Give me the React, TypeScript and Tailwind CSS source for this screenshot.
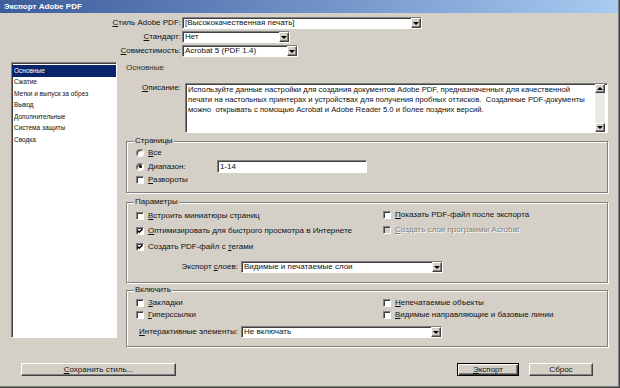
import React from 'react';

const sunken =
  'border border-t-[#808080] border-l-[#808080] border-b-white border-r-white shadow-[inset_1px_1px_0_#404040]';
const raised =
  'border border-t-white border-l-white border-b-[#404040] border-r-[#404040] shadow-[inset_-1px_-1px_0_#808080]';

function Arrow({ up }: { up?: boolean }) {
  return up ? (
    <span className="w-0 h-0 border-x-[3px] border-x-transparent border-b-[3px] border-b-black" />
  ) : (
    <span className="w-0 h-0 border-x-[3px] border-x-transparent border-t-[3px] border-t-black" />
  );
}

function Combo({ className, value }: { className: string; value: string }) {
  return (
    <div className={`${className} h-[12px] flex items-stretch bg-white ${sunken}`}>
      <span className="flex-1 pl-[2px] leading-[10px] whitespace-nowrap overflow-hidden">{value}</span>
      <span className={`w-[10px] flex items-center justify-center bg-[#d4d0c8] ${raised}`}>
        <Arrow />
      </span>
    </div>
  );
}

function Check({ on, off }: { on?: boolean; off?: boolean }) {
  return (
    <span
      className={`w-[8px] h-[8px] shrink-0 flex items-center justify-center ${off ? 'bg-[#d4d0c8]' : 'bg-white'} ${sunken}`}
    >
      {on && (
        <svg width="6" height="6" viewBox="0 0 6 6">
          <path d="M0.6 2.6 L2.2 4.3 L5.5 0.9" stroke="#000" strokeWidth="1.4" fill="none" />
        </svg>
      )}
    </span>
  );
}

function Radio({ on }: { on?: boolean }) {
  return (
    <span className="w-[8px] h-[8px] shrink-0 rounded-full bg-white border border-t-[#808080] border-l-[#808080] border-b-white border-r-white shadow-[inset_1px_1px_0_#404040] flex items-center justify-center">
      {on && <span className="w-[3px] h-[3px] rounded-full bg-black" />}
    </span>
  );
}

function Opt({ box, children, dim }: { box: React.ReactNode; children: React.ReactNode; dim?: boolean }) {
  return (
    <div className="h-[12px] flex items-center gap-[4px] whitespace-nowrap">
      {box}
      <span className={dim ? 'text-[#808080] [text-shadow:1px_1px_0_#fff]' : ''}>{children}</span>
    </div>
  );
}

function Group({ title, className, children }: { title: string; className: string; children: React.ReactNode }) {
  return (
    <div className={`relative border border-[#808080] shadow-[1px_1px_0_#fff,inset_1px_1px_0_#fff] ${className}`}>
      <span className="absolute -top-[6px] left-[7px] px-[1px] bg-[#d4d0c8] leading-[10px]">{title}</span>
      {children}
    </div>
  );
}

export default function App() {
  const pages = ['Основные', 'Сжатие', 'Метки и выпуск за обрез', 'Вывод', 'Дополнительные', 'Система защиты', 'Сводка'];

  return (
    <div className="w-[620px] h-[388px] overflow-hidden bg-[#d4d0c8] text-[8px] leading-[10px] text-[#111] font-['Liberation_Sans',Arial,sans-serif] border-r border-b border-[#404040]">
      <div className="h-full flex flex-col border-r border-b border-[#808080]">
        {/* Title bar */}
        <div className="h-[13px] shrink-0 flex items-center pl-[4px] bg-linear-to-r from-[#3d5c9c] via-[#7090c6] to-[#a8cbf1] text-white font-bold">
          Экспорт Adobe PDF
        </div>

        {/* Preset rows */}
        <div className="mt-[4px] flex flex-col gap-[2px]">
          <div className="h-[12px] flex items-center">
            <span className="w-[181px] text-right">
              <u>С</u>тиль Adobe PDF:
            </span>
            <Combo className="ml-[1px] w-[240px]" value="[Высококачественная печать]" />
          </div>
          <div className="h-[12px] flex items-center">
            <span className="w-[181px] text-right">
              <u>С</u>тандарт:
            </span>
            <Combo className="ml-[1px] w-[108px]" value="Нет" />
          </div>
          <div className="h-[12px] flex items-center">
            <span className="w-[181px] text-right">
              <u>С</u>овместимость:
            </span>
            <Combo className="ml-[1px] w-[116px]" value="Acrobat 5 (PDF 1.4)" />
          </div>
        </div>

        {/* Main */}
        <div className="mt-[5px] flex items-start">
          {/* Page list */}
          <div className={`ml-[11px] w-[106px] h-[276px] bg-white pt-[2px] text-[6.5px] ${sunken}`}>
            {pages.map((p, i) => (
              <div
                key={p}
                className={`h-[11.5px] flex items-center pl-[2px] whitespace-nowrap ${i === 0 ? 'bg-[#0a246a] text-white' : ''}`}
              >
                {p}
              </div>
            ))}
          </div>

          {/* Settings */}
          <div className="ml-[9px] w-[482px] flex flex-col">
            <div className="h-[12px] leading-[12px] text-[#303030]">Основные</div>

            <div className="mt-[9px] flex items-start">
              <span className="w-[57px] text-right">
                <u>О</u>писание:
              </span>
              <div className={`ml-[4px] w-[423px] h-[50px] shrink-0 flex bg-white ${sunken}`}>
                <div className="flex-1 pl-[2px] pt-[1px] text-[7.7px] leading-[10px] whitespace-nowrap overflow-hidden">
                  Используйте данные настройки для создания документов Adobe PDF, предназначенных для качественной
                  <br />
                  печати на настольных принтерах и устройствах для получения пробных оттисков.&nbsp; Созданные PDF-документы
                  <br />
                  можно&nbsp; открывать с помощью Acrobat и Adobe Reader 5.0 и более поздних версий.
                </div>
                <div className="w-[10px] mr-[2px] flex flex-col">
                  <span className={`h-[9px] flex items-center justify-center bg-[#d4d0c8] ${raised}`}>
                    <Arrow up />
                  </span>
                  <span className="flex-1 bg-[#ebe9e5]" />
                  <span className={`h-[9px] flex items-center justify-center bg-[#d4d0c8] ${raised}`}>
                    <Arrow />
                  </span>
                </div>
              </div>
            </div>

            <Group title="Страницы" className="mt-[8px] h-[52px]">
              <div className="pl-[9px] pt-[5px] flex flex-col">
                <Opt box={<Radio />}>
                  <u>В</u>се
                </Opt>
                <div className="h-[15px] flex items-center">
                  <div className="w-[81px] flex items-center gap-[4px]">
                    <Radio on />
                    <span>
                      <u>Д</u>иапазон:
                    </span>
                  </div>
                  <div className={`w-[150px] h-[13px] bg-white pl-[2px] flex items-center ${sunken}`}>1-14</div>
                </div>
                <Opt box={<Check />}>
                  <u>Р</u>азвороты
                </Opt>
              </div>
            </Group>

            <Group title="Параметры" className="mt-[9px] h-[81px]">
              <div className="flex pl-[9px]">
                <div className="w-[247px] pt-[7px] flex flex-col">
                  <Opt box={<Check />}>
                    <u>В</u>строить миниатюры страниц
                  </Opt>
                  <div className="mt-[3px]">
                    <Opt box={<Check on />}>
                      <u>О</u>птимизировать для быстрого просмотра в Интернете
                    </Opt>
                  </div>
                  <div className="mt-[4px]">
                    <Opt box={<Check on />}>
                      Создать PDF-файл с <u>т</u>егами
                    </Opt>
                  </div>
                </div>
                <div className="pt-[6px] flex flex-col gap-[3px]">
                  <Opt box={<Check />}>
                    <u>П</u>оказать PDF-файл после экспорта
                  </Opt>
                  <Opt box={<Check off />} dim>
                    <u>С</u>оздать слои программы Acrobat
                  </Opt>
                </div>
              </div>
              <div className="mt-[8px] h-[12px] flex items-center">
                <span className="w-[111px] text-right">
                  Экспорт <u>с</u>лоев:
                </span>
                <Combo className="ml-[3px] w-[202px]" value="Видимые и печатаемые слои" />
              </div>
            </Group>

            <Group title="Включить" className="mt-[7px] h-[57px]">
              <div className="flex pl-[9px] pt-[6px]">
                <div className="w-[247px] flex flex-col">
                  <Opt box={<Check />}>
                    <u>З</u>акладки
                  </Opt>
                  <Opt box={<Check />}>
                    <u>Г</u>иперссылки
                  </Opt>
                </div>
                <div className="flex flex-col">
                  <Opt box={<Check />}>
                    <u>Н</u>епечатаемые объекты
                  </Opt>
                  <Opt box={<Check />}>
                    <u>В</u>идимые направляющие и базовые линии
                  </Opt>
                </div>
              </div>
              <div className="mt-[5px] h-[12px] flex items-center">
                <span className="w-[111px] text-right">
                  <u>И</u>нтерактивные элементы:
                </span>
                <Combo className="ml-[3px] w-[201px]" value="Не включать" />
              </div>
            </Group>
          </div>
        </div>

        {/* Footer buttons */}
        <div className="mt-[16px] flex items-center pl-[21px] pr-[25px]">
          <button className={`w-[155px] h-[13px] flex items-center justify-center bg-[#d4d0c8] ${raised}`}>
            <span>
              <u>С</u>охранить стиль...
            </span>
          </button>
          <button className="ml-auto w-[62px] h-[13px] flex items-center justify-center bg-[#d4d0c8] border border-black shadow-[inset_1px_1px_0_#fff,inset_-1px_-1px_0_#404040,inset_-2px_-2px_0_#808080]">
            <span>
              <u>Э</u>кспорт
            </span>
          </button>
          <button className={`ml-[10px] w-[64px] h-[13px] flex items-center justify-center bg-[#d4d0c8] ${raised}`}>
            Сброс
          </button>
        </div>
      </div>
    </div>
  );
}
